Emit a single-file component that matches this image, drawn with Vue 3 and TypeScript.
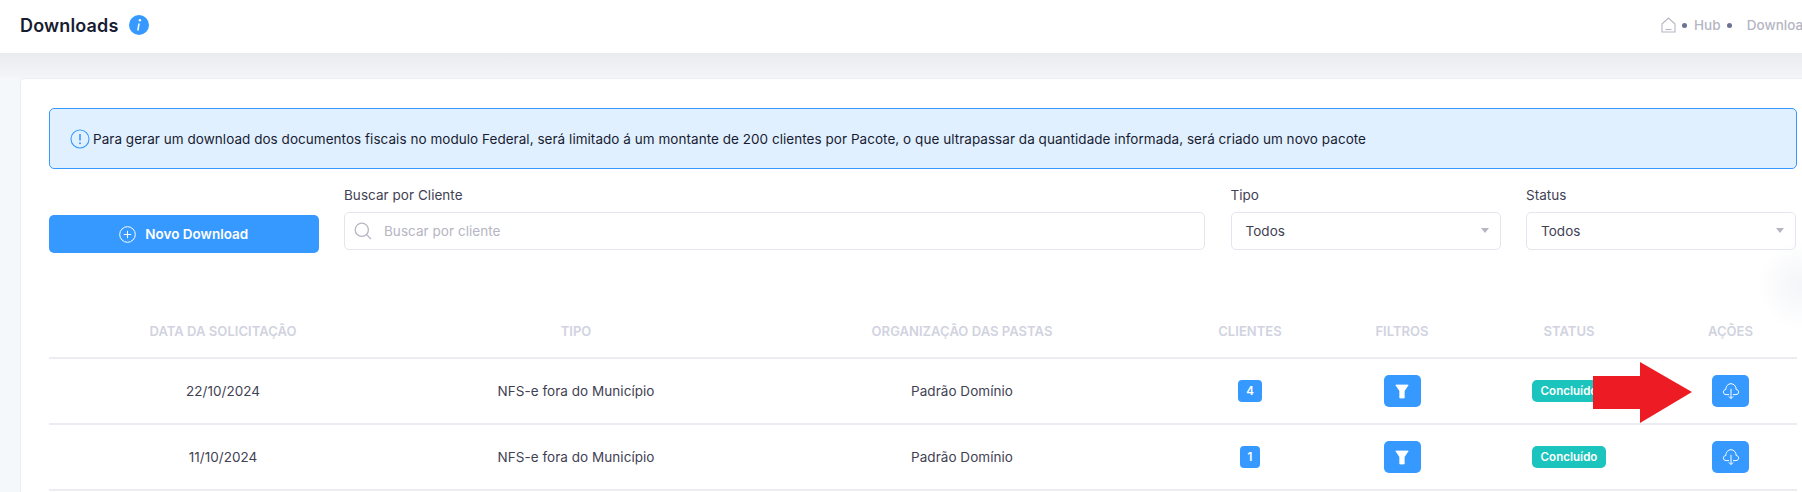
<script setup lang="ts">
interface Row { data: string; tipo: string; org: string; clientes: string }
const rows: Row[] = [
  { data: '22/10/2024', tipo: 'NFS-e fora do Município', org: 'Padrão Domínio', clientes: '4' },
  { data: '11/10/2024', tipo: 'NFS-e fora do Município', org: 'Padrão Domínio', clientes: '1' },
]
const headers = ['DATA DA SOLICITAÇÃO', 'TIPO', 'ORGANIZAÇÃO DAS PASTAS', 'CLIENTES', 'FILTROS', 'STATUS', 'AÇÕES']
</script>

<template>
  <div class="page">
    <header class="topbar">
      <div class="title-wrap">
        <h1 class="title">Downloads</h1>
        <svg class="info" viewBox="0 0 20 20" width="20" height="20">
          <circle cx="10" cy="10" r="10" fill="#3699ff" />
          <circle cx="10.9" cy="5.3" r="1.2" fill="#fff" />
          <path d="M10 8.5 L8.9 15.5" stroke="#fff" stroke-width="1.6" fill="none" />
        </svg>
      </div>
      <nav class="crumbs">
        <svg class="home" viewBox="0 0 15 16" width="15" height="16" fill="none" stroke="#b5b5c3" stroke-width="1.1">
          <path d="M1 7 L7.5 1 L14 7 V15 H1 Z" />
          <path d="M4.5 12.5 H10.5" />
        </svg>
        <span class="dot"></span>
        <span class="crumb">Hub</span>
        <span class="dot"></span>
        <span class="crumb last">Downloads</span>
      </nav>
    </header>
    <main class="content">
      <section class="card">
        <div class="alert">
          <svg class="alert-ico" viewBox="0 0 20 20" width="20" height="20" fill="none">
            <circle cx="10" cy="10" r="9" stroke="#3699ff" stroke-width="1.1" />
            <path d="M10 5 V11.5" stroke="#3699ff" stroke-width="1.6" />
            <circle cx="10" cy="14.3" r="1" fill="#3699ff" />
          </svg>
          <span>Para gerar um download dos documentos fiscais no modulo Federal, será limitado á um montante de 200 clientes por Pacote, o que ultrapassar da quantidade informada, será criado um novo pacote</span>
        </div>
        <div class="filters">
          <button class="new-btn" type="button">
            <svg viewBox="0 0 17 17" width="17" height="17" fill="none" stroke="#fff" stroke-width="1">
              <circle cx="8.5" cy="8.5" r="7.8" />
              <path d="M8.5 4.8 V12.2 M4.8 8.5 H12.2" />
            </svg>
            <span>Novo Download</span>
          </button>
          <div class="field">
            <label class="label">Buscar por Cliente</label>
            <div class="input search">
              <svg viewBox="0 0 18 18" width="18" height="18" fill="none" stroke="#b5b5c3" stroke-width="1.3">
                <circle cx="7.8" cy="7.8" r="6.6" />
                <path d="M12.6 12.6 L17 17" />
              </svg>
              <span class="placeholder">Buscar por cliente</span>
            </div>
          </div>
          <div class="field">
            <label class="label">Tipo</label>
            <div class="input select"><span>Todos</span><i class="caret"></i></div>
          </div>
          <div class="field">
            <label class="label">Status</label>
            <div class="input select"><span>Todos</span><i class="caret"></i></div>
          </div>
        </div>
        <div class="table">
          <div class="grid head">
            <div v-for="h in headers" :key="h" class="cell">{{ h }}</div>
          </div>
          <div v-for="(r, i) in rows" :key="i" class="grid row">
            <div class="cell">{{ r.data }}</div>
            <div class="cell">{{ r.tipo }}</div>
            <div class="cell">{{ r.org }}</div>
            <div class="cell"><span class="num">{{ r.clientes }}</span></div>
            <div class="cell">
              <span class="icon-btn">
                <svg viewBox="0 0 14 15" width="14" height="15"><path d="M0.8 1 H13.2 L9.2 7 V14 H4.8 V7 Z" fill="#fff" stroke="#fff" stroke-width="0.8" stroke-linejoin="round" /></svg>
              </span>
            </div>
            <div class="cell"><span class="status">Concluído</span></div>
            <div class="cell">
              <span class="icon-btn">
                <svg viewBox="0 0 18 18" width="18" height="18" fill="none" stroke="#fff" stroke-width="1">
                  <path d="M7 12.6 H4.2 C2.4 12.6 1.2 11.4 1.4 9.8 C1.6 8.4 2.6 7.6 3.9 7.5 C3.6 4.3 6.2 1.7 9 1.7 C11.8 1.7 14.4 4.3 14.1 7.5 C15.4 7.6 16.4 8.4 16.6 9.8 C16.8 11.4 15.6 12.6 13.8 12.6 H11" />
                  <path d="M9 6.8 V16.6 M6.8 14.4 L9 16.6 L11.2 14.4" />
                </svg>
              </span>
            </div>
          </div>
        </div>
      </section>
    </main>
    <svg class="arrow" viewBox="0 0 99 61" width="99" height="61">
      <path d="M0 14 H47 V0 L99 30 L47 61 V47 H0 Z" fill="#ed1c24" />
    </svg>
    <div class="scroll-glow"></div>
  </div>
</template>

<style>
html, body { margin: 0; background: #f3f6f9; overflow: hidden; }
</style>

<style scoped>
.page {
  position: relative;
  width: 1802px;
  height: 492px;
  overflow: hidden;
  font-family: Inter, "Open Sans", sans-serif;
  font-size: 13.5px;
  letter-spacing: 0.04px;
  color: #3f4254;
  background: #f5f8fa;
}
.topbar {
  height: 53px;
  box-sizing: border-box;
  background: #fff;
  display: flex;
  align-items: center;
  justify-content: space-between;
  padding: 0 0 3px 20px;
}
.title-wrap { display: flex; align-items: center; gap: 11px; }
.title { margin: 0; font-size: 18px; font-weight: 600; color: #181c32; letter-spacing: 0.15px; }
.crumbs {
  display: flex;
  align-items: center;
  width: 141px;
  flex: none;
  white-space: nowrap;
  overflow: hidden;
  color: #b5b5c3;
  font-weight: 500;
  font-size: 13.5px;
}
.home { flex: none; }
.dot { width: 5px; height: 5px; border-radius: 50%; background: #6c7293; flex: none; margin: 0 7px 0 6px; }
.crumb.last { margin-left: 8px; }
.content {
  height: 439px;
  box-sizing: border-box;
  padding: 25px 0 0 20px;
  background: linear-gradient(#eaebef 0, #f3f5f8 25px, #f5f8fa 25px);
}
.card {
  background: #fff;
  border: 1px solid #ebedf3;
  border-right: 0;
  border-radius: 5px 0 0 0;
  box-sizing: border-box;
  height: 420px;
  padding: 29px 5px 0 28px;
}
.alert {
  height: 61px;
  box-sizing: border-box;
  background: #e1f0ff;
  border: 1px solid #3699ff;
  border-radius: 5px;
  color: #181c32;
  display: flex;
  align-items: center;
  gap: 3px;
  padding: 0 0 0 20px;
  white-space: nowrap;
}
.alert-ico { flex: none; }
.filters {
  display: grid;
  grid-template-columns: 269.5px 861px 270px 270px;
  column-gap: 25.5px;
  margin-top: 16px;
  align-items: end;
}
.new-btn {
  height: 38px;
  margin-bottom: -3px;
  background: #3699ff;
  border: 0;
  border-radius: 5px;
  color: #fff;
  font: 600 13.5px Inter, sans-serif;
  display: flex;
  align-items: center;
  justify-content: center;
  gap: 9px;
  padding: 0;
}
.label { display: block; color: #3f4254; font-size: 13.5px; line-height: 20px; margin-bottom: 7px; }
.input {
  height: 38px;
  box-sizing: border-box;
  border: 1px solid #e4e6ef;
  border-radius: 5px;
  background: #fff;
  display: flex;
  align-items: center;
  padding: 0 14px;
}
.search { gap: 12px; padding-left: 9px; }
.placeholder { color: #b5b5c3; }
.select { justify-content: space-between; color: #3f4254; }
.caret {
  width: 0; height: 0;
  border-left: 4px solid transparent;
  border-right: 4px solid transparent;
  border-top: 5px solid #b5b5c3;
  margin: -2px -3px 0 0;
}
.table { margin-top: 64px; }
.grid {
  display: grid;
  grid-template-columns: 348px 358px 414px 162px 142px 192px 131px;
  border-bottom: 2px solid #ebedf3;
  align-items: center;
  text-align: center;
  box-sizing: border-box;
}
.head { height: 45px; padding-top: 9px; align-items: start; font-weight: 600; color: #d1d3e0; font-size: 13px; }
.row { height: 66px; }
.row .cell { display: flex; justify-content: center; align-items: center; }
.num {
  background: #3699ff;
  color: #fff;
  font-size: 11.5px;
  font-weight: 600;
  height: 22px;
  padding: 0 8px;
  box-sizing: border-box;
  border-radius: 4px;
  display: inline-flex;
  align-items: center;
  justify-content: center;
}
.icon-btn {
  width: 37px;
  height: 32px;
  background: #3699ff;
  border-radius: 5px;
  display: inline-flex;
  align-items: center;
  justify-content: center;
}
.status {
  width: 74px;
  height: 22px;
  background: #1bc5bd;
  color: #fff;
  border-radius: 5px;
  font-size: 11.5px;
  font-weight: 600;
  display: inline-flex;
  align-items: center;
  justify-content: center;
}
.arrow { position: absolute; left: 1593px; top: 362px; }
.scroll-glow {
  position: absolute;
  right: -45px;
  top: 240px;
  width: 90px;
  height: 90px;
  border-radius: 50%;
  background: radial-gradient(closest-side, rgba(243,244,248,0.9), rgba(255,255,255,0));
}
</style>
